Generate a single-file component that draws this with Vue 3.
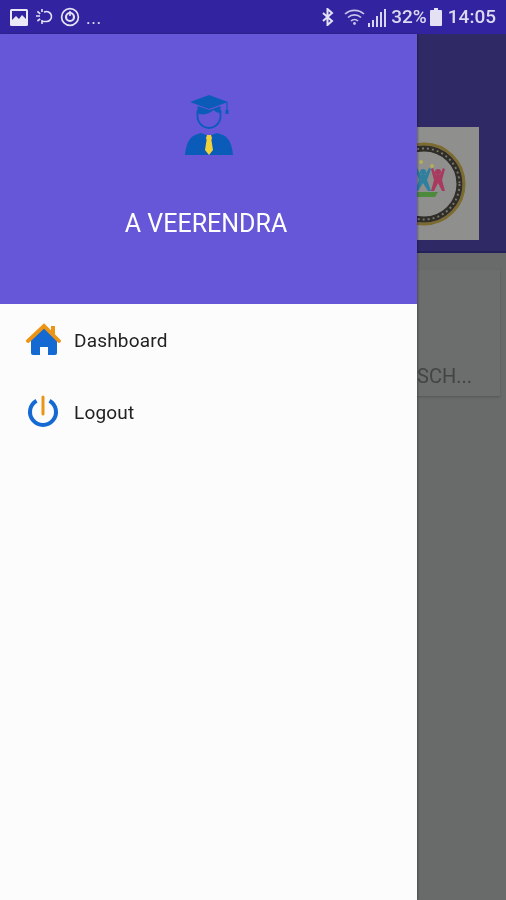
<template>
  <div class="phone">
    <header class="status">
      <div class="status-left">
        <svg class="ic-image" viewBox="0 0 18 17">
          <rect x="0" y="0" width="18" height="17" rx="1.5" fill="#ece9f6" />
          <rect x="2" y="2" width="14" height="9" fill="#3224a0" />
          <path d="M2 11l4-4 3 3 3-4 4 4v6H2z" fill="#ece9f6" />
        </svg>
        <svg class="ic-moon" viewBox="0 0 20 18" fill="none" stroke="#e4e1f4" stroke-width="1.6">
          <path d="M9 4.200a5 5 0 1 1 2 9.300H7" />
          <path d="M1 8h4M2.400 3.400l2.800 2.400M7 1v3M2.400 13l2.800-2.200M7 12v4" />
        </svg>
        <svg class="ic-ring" viewBox="0 0 20 20" fill="none" stroke="#e4e1f4">
          <circle cx="10" cy="10" r="8.400" stroke-width="1.700" />
          <circle cx="10" cy="10" r="4" stroke-width="2.200" />
          <path d="M10 4v5" stroke-width="1.600" />
        </svg>
        <span class="dots">...</span>
      </div>
      <div class="status-right">
        <svg class="ic-bt" viewBox="0 0 12 18" fill="none" stroke="#e4e1f4" stroke-width="2">
          <path d="M1 5l9 8-4.500 4V1l4.500 4-9 8" />
        </svg>
        <svg class="ic-wifi" viewBox="0 0 22 18" fill="none" stroke="#c9c5e6" stroke-width="1.700">
          <path d="M1 6a14 14 0 0 1 19 0M4 9.500a9.500 9.500 0 0 1 13 0M7 13a5 5 0 0 1 7 0" />
          <circle cx="10.500" cy="15.500" r="1.400" fill="#c9c5e6" stroke="none" />
        </svg>
        <div class="signal">
          <i v-for="h in bars" :key="h" :style="{ height: h + 'px' }"></i>
        </div>
        <span class="pct">32%</span>
        <svg class="ic-batt" viewBox="0 0 12 18">
          <path d="M4 0h4v2h3a1 1 0 0 1 1 1v14a1 1 0 0 1-1 1H1a1 1 0 0 1-1-1V3a1 1 0 0 1 1-1h3z" fill="#e4e1f4" />
        </svg>
        <span class="time">14:05</span>
      </div>
    </header>

    <main class="behind">
      <section class="hero">
        <div class="logo-card">
          <svg class="emblem" viewBox="0 0 84 84">
            <circle cx="42" cy="42" r="40" fill="#8f8f8d" stroke="#7d6a2e" stroke-width="3" />
            <circle cx="42" cy="42" r="35.500" fill="none" stroke="#2f2d28" stroke-width="6" />
            <circle cx="42" cy="42" r="35.500" fill="none" stroke="#77756c" stroke-width="2" stroke-dasharray="2 3" />
            <path d="M10 50h46l-3 5H14z" fill="#4e8a3c" />
            <circle cx="39" cy="20" r="2" fill="#b4ad5c" />
            <circle cx="50" cy="24" r="2" fill="#b4ad5c" />
            <circle cx="41" cy="30" r="3" fill="#2f7f9f" />
            <path d="M33 27l2-1 4 7h4l4-7 2 1-4 11 4 11h-3l-5-8-5 8h-3l4-11z" fill="#2f7f9f" />
            <circle cx="56" cy="30" r="3" fill="#a83a60" />
            <path d="M49 27l2-1 3 7h4l3-7 2 1-3 11 3 11h-3l-4-8-4 8h-3l3-11z" fill="#a83a60" />
          </svg>
        </div>
      </section>
      <section class="card">
        <span class="card-title">SCH...</span>
      </section>
    </main>

    <aside class="drawer">
      <div class="drawer-head">
        <svg class="avatar" viewBox="0 0 50 62">
          <path d="M25 1L44 8 25 15 6 8z" fill="#0b5cb8" />
          <path d="M13.500 12v7c5 3 12 1 16-3 2 2 4 3 7 3v-7l-11 4z" fill="#0b5cb8" />
          <path d="M43 8v9" stroke="#0b5cb8" stroke-width="1.200" />
          <rect x="41.500" y="16" width="3" height="4" fill="#0b5cb8" />
          <path d="M13.500 16v6a11.500 12 0 0 0 23 0v-6" fill="none" stroke="#0b5cb8" stroke-width="1.800" />
          <path d="M17 39l8 3 8-3 6 2c6 3 9 9 10 20H1C2 50 5 44 11 41z" fill="#0b5cb8" />
          <path d="M23 41h4l1 3-.600 2 1.600 10-4 5-4-5 1.600-10-.600-2z" fill="#f2d23a" />
        </svg>
        <div class="name">A VEERENDRA</div>
      </div>
      <nav class="menu">
        <a v-for="item in menu" :key="item.label" class="menu-item">
          <svg v-if="item.icon === 'home'" class="menu-icon" viewBox="0 0 36 36">
            <path d="M6 17L19 6l13 11v14a2 2 0 0 1-2 2h-7v-8h-8v8H8a2 2 0 0 1-2-2z" fill="#1469d2" />
            <path d="M3 19L19 4l15 15" fill="none" stroke="#ec9413" stroke-width="3.800" stroke-linecap="round" />
            <path d="M26 4h4v9l-4-4z" fill="#ec9413" />
          </svg>
          <svg v-else class="menu-icon" viewBox="0 0 36 36">
            <path d="M11.500 6.700a13 13 0 1 0 13 0" fill="none" stroke="#1469d2" stroke-width="4" />
            <path d="M18 3v17" stroke="#ec9413" stroke-width="3" stroke-linecap="round" />
          </svg>
          <span class="menu-label">{{ item.label }}</span>
        </a>
      </nav>
    </aside>
  </div>
</template>

<script setup>
const bars = [4, 7, 11, 15, 18]

const menu = [
  { label: 'Dashboard', icon: 'home' },
  { label: 'Logout', icon: 'power' }
]
</script>

<style>
html,
body {
  margin: 0;
  background: #696b6b;
}
</style>

<style scoped>
.phone {
  position: relative;
  width: 506px;
  height: 900px;
  overflow: hidden;
  background: #696b6b;
  font-family: Roboto, "Liberation Sans", sans-serif;
}

.status {
  height: 34px;
  background: #3224a0;
  display: flex;
  align-items: center;
  justify-content: space-between;
  padding: 0 10px 0 10px;
  box-sizing: border-box;
  color: #dcd9f0;
}

.status-left,
.status-right {
  display: flex;
  align-items: center;
  filter: blur(0.5px);
}

.ic-image {
  width: 18px;
  height: 17px;
  margin-right: 7px;
}

.ic-moon {
  width: 20px;
  height: 18px;
  margin-right: 5px;
}

.ic-ring {
  width: 20px;
  height: 20px;
  margin-right: 6px;
}

.dots {
  font-size: 18px;
  line-height: 18px;
  letter-spacing: 0.5px;
  margin-top: 2px;
}

.ic-bt {
  width: 12px;
  height: 18px;
  margin-right: 10px;
}

.ic-wifi {
  width: 22px;
  height: 18px;
  margin-right: 2px;
}

.signal {
  display: flex;
  align-items: flex-end;
  gap: 2px;
  height: 20px;
  margin-right: 5px;
}

.signal i {
  width: 2px;
  background: #d8d5ee;
}

.pct,
.time {
  font-size: 19px;
  line-height: 20px;
  font-weight: 500;
}

.ic-batt {
  width: 12px;
  height: 18px;
  margin: 0 6px 0 3px;
}

.behind {
  display: flex;
  flex-direction: column;
}

.hero {
  height: 219px;
  box-sizing: border-box;
  padding: 93px 27px 0 0;
  background: #2f2a66;
  border-bottom: 2px solid #23205a;
  display: flex;
  justify-content: flex-end;
}

.logo-card {
  width: 120px;
  height: 113px;
  background: #8f8f8d;
  display: flex;
  align-items: center;
  padding-left: 23px;
  box-sizing: border-box;
  filter: blur(0.5px);
}

.emblem {
  width: 84px;
  height: 84px;
  flex: none;
}

.card {
  height: 126px;
  margin: 17px 6px 0 6px;
  box-sizing: border-box;
  background: #6c6d6d;
  box-shadow: 0 1px 2px rgba(0, 0, 0, 0.2);
  display: flex;
  align-items: flex-end;
  justify-content: flex-end;
  padding: 0 28px 8px 0;
}

.card-title {
  font-size: 20px;
  line-height: 24px;
  color: #434444;
  filter: blur(0.5px);
}

.drawer {
  position: absolute;
  top: 34px;
  left: 0;
  bottom: 0;
  width: 417px;
  background: #fcfcfc;
  box-shadow: 1px 0 2px rgba(0, 0, 0, 0.3);
}

.drawer-head {
  height: 270px;
  box-sizing: border-box;
  padding-top: 60px;
  background: #6557d8;
  display: flex;
  flex-direction: column;
  align-items: center;
}

.avatar {
  width: 50px;
  height: 62px;
  filter: blur(0.5px);
}

.name {
  margin-top: 53px;
  padding-right: 5px;
  font-size: 25px;
  line-height: 30px;
  color: #fff;
  filter: blur(0.4px);
}

.menu {
  display: flex;
  flex-direction: column;
}

.menu-item {
  height: 72px;
  display: flex;
  align-items: center;
  padding-left: 25px;
}

.menu-icon {
  width: 36px;
  height: 36px;
  margin-right: 13px;
  filter: blur(0.5px);
}

.menu-label {
  font-size: 19px;
  letter-spacing: 0.2px;
  color: #222;
  filter: blur(0.5px);
}
</style>
